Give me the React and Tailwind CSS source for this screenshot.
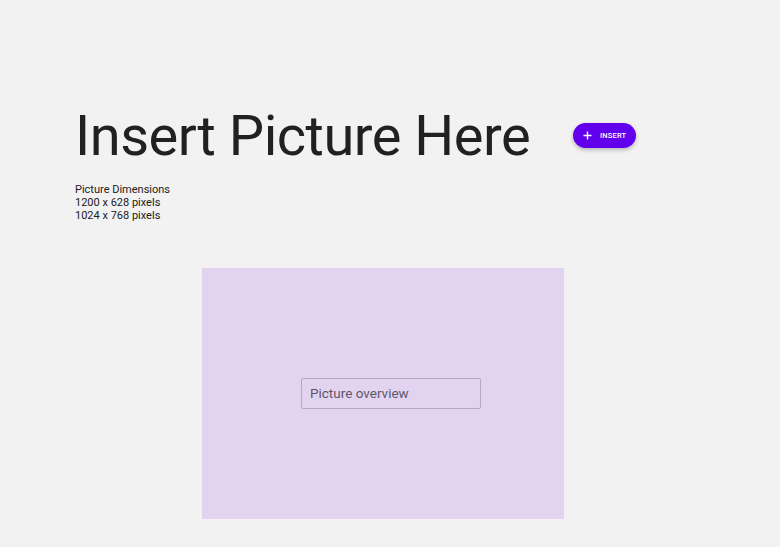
export default function App() {
  return (
    <div className="min-h-[547px] w-[780px] bg-[#f2f2f2] pt-[108px] pl-[75px] font-['Roboto',sans-serif] text-[#212121]">
      <div className="flex items-center">
        <h1 className="text-[56px] leading-[56px] font-normal tracking-[-0.5px]">Insert Picture Here</h1>
        <button className="ml-[43px] mt-[-1px] flex h-[25px] w-[63px] items-center justify-center gap-[8px] rounded-full bg-[#6200ee] text-white shadow-[0_2px_4px_rgba(0,0,0,0.25)]">
          <svg width="9" height="9" viewBox="0 0 9 9" fill="none" stroke="currentColor" strokeWidth="1.4">
            <path d="M4.5 0.5v8M0.5 4.5h8" />
          </svg>
          <span className="text-[7.5px] font-medium tracking-[0.2px]">INSERT</span>
        </button>
      </div>
      <div className="mt-[19px] text-[11px] leading-[13px]">
        <p>Picture Dimensions</p>
        <p>1200 x 628 pixels</p>
        <p>1024 x 768 pixels</p>
      </div>
      <div className="ml-[127px] mt-[46px] flex h-[251px] w-[362px] items-center justify-center bg-[#e2d4f1] pl-[16px]">
        <div className="flex h-[31px] w-[180px] items-center rounded-[2px] border border-[#b5a6c5] pl-[8px] text-[13.5px] text-[#5f5669]">
          Picture overview
        </div>
      </div>
    </div>
  );
}
